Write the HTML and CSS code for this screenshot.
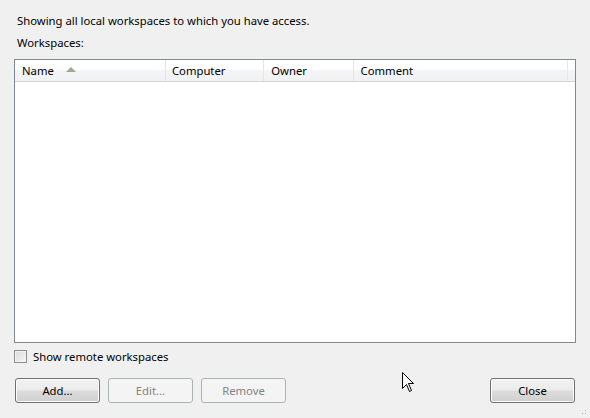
FILE: index.html
```html
<!DOCTYPE html>
<html>
<head>
<meta charset="utf-8">
<link rel="stylesheet" href="styles.css">
</head>
<body>
<div class="dialog">
  <div class="intro">Showing all local workspaces to which you have access.</div>
  <div class="label">Workspaces:</div>
  <div class="list">
    <div class="header">
      <div class="col c-name">Name <span class="sort"></span></div>
      <div class="col c-computer">Computer</div>
      <div class="col c-owner">Owner</div>
      <div class="col c-comment">Comment</div>
      <div class="col c-rest"></div>
    </div>
    <div class="body"></div>
  </div>
  <label class="check"><span class="box"></span>Show remote workspaces</label>
  <div class="buttons">
    <button class="btn">Add...</button>
    <button class="btn" disabled>Edit...</button>
    <button class="btn" disabled>Remove</button>
    <span class="spacer"></span>
    <button class="btn">Close</button>
  </div>
  <svg class="cursor" width="13" height="21" viewBox="0 0 13 21">
    <path d="M0.5 0.5 L0.5 16.5 L4.5 12.5 L7.5 19.5 L9.5 18.5 L6.5 11.5 L11.5 11.5 Z" fill="#fff" stroke="#000" stroke-width="1" stroke-linejoin="miter"/>
  </svg>
  <div class="grip"></div>
</div>
</body>
</html>
```
FILE: styles.css
```css
html, body {
  margin: 0;
  padding: 0;
  background: #f0f0f0;
  width: 590px;
  height: 418px;
  overflow: hidden;
}
.dialog {
  position: relative;
  height: 418px;
  box-sizing: border-box;
  padding: 13px 14px 0 14px;
  font-family: "Noto Sans", "Open Sans", sans-serif;
  font-size: 11.3px;
  color: #000;
}
.intro {
  padding-left: 3px;
  line-height: 16px;
  height: 16px;
}
.label {
  padding-left: 3px;
  margin-top: 6px;
  line-height: 16px;
  height: 16px;
}
.list {
  margin-top: 8px;
  width: 562px;
  height: 284px;
  box-sizing: border-box;
  border: 1px solid #828790;
  background: #fff;
  display: flex;
  flex-direction: column;
}
.header {
  display: flex;
  height: 22px;
  box-sizing: border-box;
  background: linear-gradient(#ffffff 0%, #ffffff 45%, #f3f4f6 50%, #f1f2f4 100%);
  border-bottom: 1px solid #d5d5d5;
}
.col {
  box-sizing: border-box;
  border-right: 1px solid #e3e4e6;
  line-height: 21px;
  padding-left: 7px;
  display: flex;
  align-items: center;
}
.c-name { width: 152px; }
.c-computer { width: 99px; padding-left: 6px; }
.c-owner { width: 90px; padding-left: 7px; }
.c-comment { width: 216px; padding-left: 7px; border-right: 1px solid #e8e8e8; }
.c-rest { flex: 1; border-right: none; }
.sort {
  display: inline-block;
  width: 0;
  height: 0;
  margin-left: 12px;
  margin-top: -2px;
  border-left: 5px solid transparent;
  border-right: 5px solid transparent;
  border-bottom: 5px solid #a3a392;
}
.body { flex: 1; }
.check {
  display: flex;
  align-items: center;
  margin-top: 7px;
  height: 13px;
  line-height: 13px;
}
.box {
  width: 11px;
  height: 11px;
  border: 1px solid #8e8f8f;
  background: linear-gradient(135deg, #dcdcdc, #f4f4f4);
  margin-right: 6px;
  box-shadow: inset 0 0 0 1px #f2f2f2;
}
.buttons {
  display: flex;
  margin-top: 15px;
  padding-left: 1px;
  gap: 8px;
  width: 560px;
}
.spacer { flex: 1; }
.btn {
  width: 85px;
  height: 25px;
  box-sizing: border-box;
  border: 1px solid #707070;
  border-radius: 3px;
  background: linear-gradient(#f2f2f2 0%, #ebebeb 49%, #dddddd 51%, #cfcfcf 100%);
  font-family: "Noto Sans", "Open Sans", sans-serif;
  font-size: 11.3px;
  color: #000;
  padding: 0;
  box-shadow: inset 0 0 0 1px #fcfcfc;
}
.btn:disabled {
  border-color: #adb2b5;
  background: #f4f4f4;
  color: #838383;
  box-shadow: none;
}
.cursor {
  position: absolute;
  left: 402px;
  top: 372px;
}
.grip {
  position: absolute;
  right: 2px;
  bottom: 2px;
  width: 10px;
  height: 10px;
  background-image: radial-gradient(circle, #b8b8b8 0.8px, transparent 1px);
  background-size: 3px 3px;
  clip-path: polygon(100% 0, 100% 100%, 0 100%);
}
```
